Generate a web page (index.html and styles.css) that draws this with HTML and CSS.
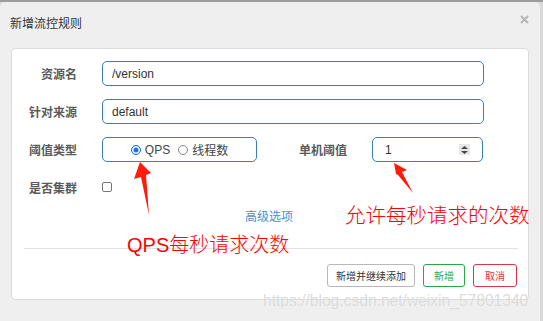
FILE: index.html
```html
<!DOCTYPE html>
<html lang="zh-CN">
<head>
    <meta charset="UTF-8">
    <meta name="viewport" content="width=device-width, initial-scale=1.0">
    <title>新增流控规则</title>
    <link rel="stylesheet" href="styles.css">
</head>
<body>
<div class="modal">
    <div class="modal-header">
        <span class="modal-title">新增流控规则</span>
        <span class="close">
            <svg width="9" height="9" viewBox="0 0 9 9"><path d="M1 1L8 8M8 1L1 8" stroke="#b5b5b5" stroke-width="2"/></svg>
        </span>
    </div>

    <div class="panel">
        <div class="form">
            <div class="row">
                <label class="label">资源名</label>
                <div class="input wide">/version</div>
            </div>
            <div class="row">
                <label class="label">针对来源</label>
                <div class="input wide">default</div>
            </div>
            <div class="row">
                <label class="label">阈值类型</label>
                <div class="input radios">
                    <span class="radio checked"></span><span class="opt">QPS</span>
                    <span class="radio"></span><span class="opt">线程数</span>
                </div>
                <label class="label label2">单机阈值</label>
                <div class="input small">
                    <span>1</span>
                    <span class="spin">
                        <svg width="9" height="10" viewBox="0 0 9 10"><path d="M4.5 1L8 4H1Z M4.5 9L8 6H1Z" fill="#444"/></svg>
                    </span>
                </div>
            </div>
            <div class="row">
                <label class="label">是否集群</label>
                <span class="checkbox"></span>
            </div>
        </div>

        <div class="more"><a href="#">高级选项</a></div>

        <hr class="sep">

        <div class="buttons">
            <button class="btn">新增并继续添加</button>
            <button class="btn ok">新增</button>
            <button class="btn cancel">取消</button>
        </div>
    </div>
</div>

<!-- annotations drawn over the screenshot -->
<svg class="marks" width="543" height="321" viewBox="0 0 543 321">
    <polygon points="140,162 151,173 146,175 149,215 141,177 134,179" fill="#ff1a0a"/>
    <polygon points="394,163 407,170 402,172 413,193 398,175 396,174" fill="#ff1a0a"/>
</svg>
<div class="note note1">QPS每秒请求次数</div>
<div class="note note2">允许每秒请求的次数</div>
<div class="watermark">https://blog.csdn.net/weixin_57801340</div>
</body>
</html>
```

FILE: styles.css
```css
* {
    box-sizing: border-box;
}

body {
    margin: 0;
    width: 543px;
    height: 321px;
    overflow: hidden;
    background-color: #d9d9d9;
    border-top: 2px solid #9c9c9c;
    font-family: 'Liberation Sans', 'Noto Sans CJK SC', sans-serif;
    color: #333;
    position: relative;
}

.modal {
    width: 540px;
    height: 319px;
    background-color: #efefef;
    border-radius: 5px 5px 0 0;
}

.modal-header {
    height: 46px;
    padding: 14px 10px 0 10px;
    display: flex;
    justify-content: space-between;
}

.modal-title {
    font-size: 12px;
    line-height: 16px;
    color: #333;
}

.close {
    margin-top: -6px;
    margin-right: 1px;
}

.panel {
    margin: 0 11px;
    height: 252px;
    background-color: #fff;
    border: 1px solid #dcdcdc;
    border-radius: 4px;
    padding: 12px 11px 12px 0;
}

.form {
    display: flex;
    flex-direction: column;
    gap: 13px;
}

.row {
    display: flex;
    align-items: center;
    height: 25px;
}

.label {
    width: 65px;
    margin-right: 25px;
    text-align: right;
    font-size: 12px;
    font-weight: bold;
    color: #5a5a5a;
}

.label2 {
    width: 90px;
}

.input {
    height: 25px;
    border: 1px solid #3a7ec2;
    border-radius: 5px;
    font-size: 12px;
    display: flex;
    align-items: center;
    padding-left: 9px;
    color: #333;
}

.wide {
    width: 382px;
}

.radios {
    width: 155px;
    padding-left: 0;
    justify-content: center;
}

.radio {
    width: 10px;
    height: 10px;
    border: 1px solid #888;
    border-radius: 50%;
    margin-right: 4px;
}

.radio.checked {
    border-color: #1a73e8;
    background-color: #1a73e8;
    box-shadow: inset 0 0 0 1.5px #fff;
}

.opt {
    margin-right: 8px;
    color: #444;
}

.opt:last-child {
    margin-right: 0;
}

.small {
    width: 111px;
    padding-left: 12px;
    justify-content: space-between;
    padding-right: 12px;
}

.spin {
    width: 11px;
    height: 11px;
    background-color: #e6e6e6;
    display: flex;
    align-items: center;
    justify-content: center;
}

.checkbox {
    width: 10px;
    height: 10px;
    border: 1px solid #777;
    border-radius: 2px;
    margin-top: -1px;
}

.more {
    margin-top: 10px;
    height: 15px;
    padding-left: 233px;
    font-size: 12px;
    line-height: 15px;
}

.more a {
    color: #4a8fcb;
    text-decoration: none;
}

.sep {
    margin: 23px 0 0 12px;
    border: none;
    border-top: 1px solid #e2e2e2;
    width: 494px;
}

.buttons {
    margin-top: 15px;
    display: flex;
    justify-content: flex-end;
    gap: 8px;
}

.btn {
    height: 23px;
    padding: 0 8px;
    font-size: 10px;
    font-family: 'Liberation Sans', 'Noto Sans CJK SC', sans-serif;
    background-color: #fff;
    color: #333;
    border: 1px solid #b8b8b8;
    border-radius: 3px;
}

.btn.ok {
    color: #2aa745;
    border-color: #2aa745;
    padding: 0 10px;
}

.btn.cancel {
    color: #dc3545;
    border-color: #dc3545;
    padding: 0 11px;
}

.marks {
    position: absolute;
    left: 0;
    top: -2px;
}

.note {
    position: absolute;
    color: #ff0000;
    font-weight: 300;
    white-space: nowrap;
}

.note1 {
    left: 127px;
    top: 227px;
    font-size: 20px;
}

.note2 {
    left: 345px;
    top: 197px;
    font-size: 20.5px;
}

.watermark {
    position: absolute;
    left: 263px;
    top: 290px;
    font-size: 15.6px;
    color: rgba(190, 190, 190, 0.55);
    text-shadow: 0 0 1px rgba(255, 255, 255, 0.9);
    white-space: nowrap;
}
```
